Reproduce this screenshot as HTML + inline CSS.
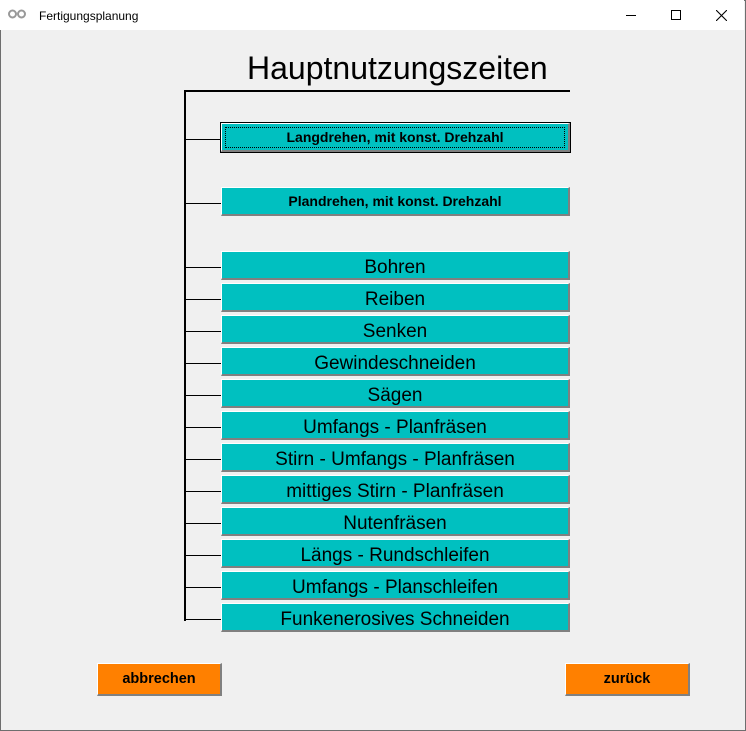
<!DOCTYPE html>
<html><head><meta charset="utf-8"><style>
*{margin:0;padding:0;box-sizing:border-box}
body{width:746px;height:731px;overflow:hidden;background:#f0f0f0;font-family:"Liberation Sans",sans-serif;position:relative}
.win{position:absolute;left:0;top:0;width:746px;height:731px;border:1px solid #6e6e6e}
.tb{position:absolute;left:0;top:0;width:744px;height:30px;background:#fff}
.tb .t{position:absolute;left:39px;top:9px;font-size:12px;color:#000}
.abs{position:absolute}
.btn{position:absolute;left:221px;width:349px;height:29px;background:#00c0c0;border-top:1px solid #fff;border-left:1px solid #fff;border-right:2px solid #808080;border-bottom:2px solid #808080;text-align:center;font-size:19px;line-height:28px;padding-top:2px;color:#000;overflow:visible}
.sm{font-size:14px;font-weight:bold;line-height:26px;padding-top:0}
.hl{position:absolute;left:186px;width:35px;height:1px;background:#000}
.ob{position:absolute;top:663px;width:125px;height:33px;background:#ff8000;border-top:1px solid #fff;border-left:1px solid #fff;border-right:2px solid #808080;border-bottom:2px solid #808080;text-align:center;font-weight:bold;font-size:14.5px;line-height:31px}
</style></head><body>
<div class="win"></div>
<div class="tb"><svg class="abs" style="left:8px;top:9px" width="18" height="10"><circle cx="4.5" cy="5" r="3.5" fill="none" stroke="#999" stroke-width="2"/><circle cx="13.5" cy="5" r="3.5" fill="none" stroke="#999" stroke-width="2"/></svg><div class="t">Fertigungsplanung</div>
<div class="abs" style="left:626px;top:15px;width:10px;height:1px;background:#000"></div>
<div class="abs" style="left:671px;top:10px;width:10px;height:10px;border:1px solid #000"></div>
<svg class="abs" style="left:716px;top:10px" width="11" height="11"><path d="M0 0L11 11M11 0L0 11" stroke="#000" stroke-width="1.1"/></svg>
</div>
<div class="abs" style="left:247px;top:50px;font-size:32px;color:#000">Hauptnutzungszeiten</div>
<div class="abs" style="left:184px;top:90px;width:386px;height:2px;background:#000"></div>
<div class="abs" style="left:184px;top:90px;width:2px;height:531px;background:#000"></div>
<div class="hl" style="top:139px"></div><div class="hl" style="top:203px"></div>
<div class="hl" style="top:267px"></div><div class="hl" style="top:299px"></div><div class="hl" style="top:331px"></div><div class="hl" style="top:363px"></div><div class="hl" style="top:395px"></div><div class="hl" style="top:427px"></div><div class="hl" style="top:459px"></div><div class="hl" style="top:491px"></div><div class="hl" style="top:523px"></div><div class="hl" style="top:555px"></div><div class="hl" style="top:587px"></div><div class="hl" style="top:619px"></div>
<div class="btn sm" style="top:123px;outline:1px solid #000"><span style="position:absolute;left:3px;top:3px;right:3px;bottom:2px;border:1px dotted #000"></span><span style="position:relative;line-height:25px">Langdrehen, mit konst. Drehzahl</span></div>
<div class="btn sm" style="top:187px">Plandrehen, mit konst. Drehzahl</div>
<div class="btn" style="top:251px">Bohren</div>
<div class="btn" style="top:283px">Reiben</div>
<div class="btn" style="top:315px">Senken</div>
<div class="btn" style="top:347px">Gewindeschneiden</div>
<div class="btn" style="top:379px">Sägen</div>
<div class="btn" style="top:411px">Umfangs - Planfräsen</div>
<div class="btn" style="top:443px">Stirn - Umfangs - Planfräsen</div>
<div class="btn" style="top:475px">mittiges Stirn - Planfräsen</div>
<div class="btn" style="top:507px">Nutenfräsen</div>
<div class="btn" style="top:539px">Längs - Rundschleifen</div>
<div class="btn" style="top:571px">Umfangs - Planschleifen</div>
<div class="btn" style="top:603px">Funkenerosives Schneiden</div>
<div class="ob" style="left:97px">abbrechen</div>
<div class="ob" style="left:565px">zurück</div>
</body></html>
